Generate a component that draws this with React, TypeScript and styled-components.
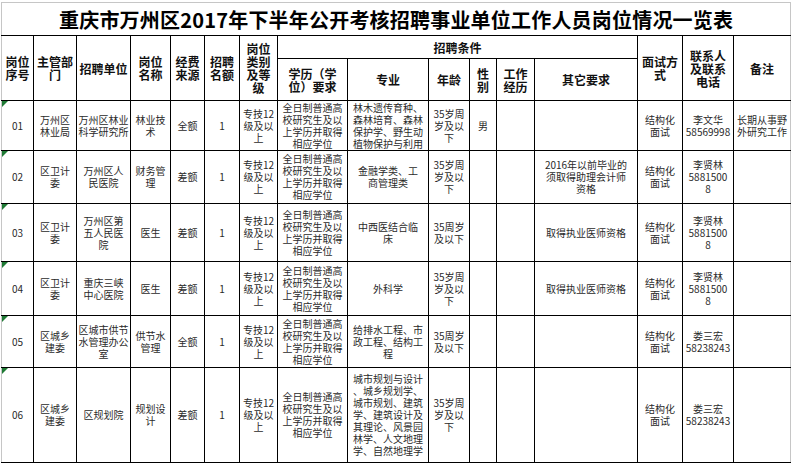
import React from "react";
import styled, { createGlobalStyle } from "styled-components";

const GlobalStyle = createGlobalStyle`
  html, body {
    margin: 0;
    padding: 0;
    background: #fff;
  }
  body {
    font-family: "Noto Sans CJK SC", "Liberation Sans", sans-serif;
  }
`;

const Wrapper = styled.div`
  width: 792px;
  height: 464px;
  overflow: hidden;
  padding: 2px 0 0 1px;
  box-sizing: border-box;
`;

const Sheet = styled.table`
  border-collapse: collapse;
  table-layout: fixed;
  width: 790px;
`;

const Col = styled.col<{ $w: number }>`
  width: ${(p) => p.$w}px;
`;

const Row = styled.tr<{ $h: number }>`
  height: ${(p) => p.$h}px;
`;

const TitleCell = styled.td`
  border: 1px solid #c6c6c6;
  border-bottom: 1px solid #000;
  text-align: center;
  vertical-align: middle;
  font-size: 20px;
  font-weight: 700;
  color: #000;
  letter-spacing: 0.2px;
  padding: 0;
`;

const HeadCell = styled.td<{ $edge?: "left" | "right" }>`
  border: 1px solid #000;
  ${(p) => (p.$edge === "left" ? "border-left-color: #c6c6c6;" : "")}
  ${(p) => (p.$edge === "right" ? "border-right-color: #c6c6c6;" : "")}
  text-align: center;
  vertical-align: middle;
  font-size: 12px;
  line-height: 13px;
  font-weight: 700;
  color: #111;
  white-space: pre;
  padding: 0 1px;
`;

const Cell = styled.td<{ $edge?: "left" | "right"; $flag?: boolean }>`
  position: relative;
  border: 1px solid #000;
  ${(p) => (p.$edge === "left" ? "border-left-color: #c6c6c6;" : "")}
  ${(p) => (p.$edge === "right" ? "border-right-color: #c6c6c6;" : "")}
  text-align: center;
  vertical-align: middle;
  font-size: 10px;
  line-height: 12px;
  color: #2a2a2a;
  white-space: pre;
  padding: 0 1px;

  &::before {
    content: "";
    display: ${(p) => (p.$flag ? "block" : "none")};
    position: absolute;
    top: 0;
    left: 0;
    border-top: 6px solid #1f7a34;
    border-right: 6px solid transparent;
  }
`;

const widths = [32, 43, 54, 40, 34, 35, 38, 70, 81, 41, 27, 38, 103, 45, 51, 57];

const edu = "全日制普通高\n校研究生及以\n上学历并取得\n相应学位";
const rank = "专技12\n级及以\n上";
const age = "35岁周\n岁及以\n下";
const age2 = "35周岁\n及以下";
const exam = "结构化\n面试";

interface Post {
  no: string;
  dept: string;
  unit: string;
  name: string;
  fund: string;
  quota: string;
  major: string;
  age: string;
  sex: string;
  other: string;
  contact: string;
  note: string;
  h: number;
}

const posts: Post[] = [
  {
    no: "01",
    dept: "万州区\n林业局",
    unit: "万州区林业\n科学研究所",
    name: "林业技\n术",
    fund: "全额",
    quota: "1",
    major: "林木遗传育种、\n森林培育、森林\n保护学、野生动\n植物保护与利用",
    age: age,
    sex: "男",
    other: "",
    contact: "李文华\n58569998",
    note: "长期从事野\n外研究工作",
    h: 50,
  },
  {
    no: "02",
    dept: "区卫计\n委",
    unit: "万州区人\n民医院",
    name: "财务管\n理",
    fund: "差额",
    quota: "1",
    major: "金融学类、工\n商管理类",
    age: age,
    sex: "",
    other: "2016年以前毕业的\n须取得助理会计师\n资格",
    contact: "李贤林\n5881500\n8",
    note: "",
    h: 53,
  },
  {
    no: "03",
    dept: "区卫计\n委",
    unit: "万州区第\n五人民医\n院",
    name: "医生",
    fund: "差额",
    quota: "1",
    major: "中西医结合临\n床",
    age: age2,
    sex: "",
    other: "取得执业医师资格",
    contact: "李贤林\n5881500\n8",
    note: "",
    h: 58,
  },
  {
    no: "04",
    dept: "区卫计\n委",
    unit: "重庆三峡\n中心医院",
    name: "医生",
    fund: "差额",
    quota: "1",
    major: "外科学",
    age: age,
    sex: "",
    other: "取得执业医师资格",
    contact: "李贤林\n5881500\n8",
    note: "",
    h: 54,
  },
  {
    no: "05",
    dept: "区城乡\n建委",
    unit: "区城市供节\n水管理办公\n室",
    name: "供节水\n管理",
    fund: "全额",
    quota: "1",
    major: "给排水工程、市\n政工程、结构工\n程",
    age: age2,
    sex: "",
    other: "",
    contact: "娄三宏\n58238243",
    note: "",
    h: 52,
  },
  {
    no: "06",
    dept: "区城乡\n建委",
    unit: "区规划院",
    name: "规划设\n计",
    fund: "差额",
    quota: "1",
    major:
      "城市规划与设计\n、城乡规划学、\n城市规划、建筑\n学、建筑设计及\n其理论、风景园\n林学、人文地理\n学、自然地理学",
    age: age,
    sex: "",
    other: "",
    contact: "娄三宏\n58238243",
    note: "",
    h: 95,
  },
];

const App: React.FC = () => {
  return (
    <Wrapper>
      <GlobalStyle />
      <Sheet>
        <colgroup>
          {widths.map((w, i) => (
            <Col key={i} $w={w} />
          ))}
        </colgroup>
        <tbody>
          <Row $h={33}>
            <TitleCell colSpan={16}>
              重庆市万州区2017年下半年公开考核招聘事业单位工作人员岗位情况一览表
            </TitleCell>
          </Row>
          <Row $h={23}>
            <HeadCell rowSpan={2} $edge="left">{"岗位\n序号"}</HeadCell>
            <HeadCell rowSpan={2}>{"主管部\n门"}</HeadCell>
            <HeadCell rowSpan={2}>招聘单位</HeadCell>
            <HeadCell rowSpan={2}>{"岗位\n名称"}</HeadCell>
            <HeadCell rowSpan={2}>{"经费\n来源"}</HeadCell>
            <HeadCell rowSpan={2}>{"招聘\n名额"}</HeadCell>
            <HeadCell rowSpan={2}>{"岗位\n类别\n及等\n级"}</HeadCell>
            <HeadCell colSpan={6}>招聘条件</HeadCell>
            <HeadCell rowSpan={2}>{"面试方\n式"}</HeadCell>
            <HeadCell rowSpan={2}>{"联系人\n及联系\n电话"}</HeadCell>
            <HeadCell rowSpan={2} $edge="right">备注</HeadCell>
          </Row>
          <Row $h={42}>
            <HeadCell>{"学历（学\n位）要求"}</HeadCell>
            <HeadCell>专业</HeadCell>
            <HeadCell>年龄</HeadCell>
            <HeadCell>{"性\n别"}</HeadCell>
            <HeadCell>{"工作\n经历"}</HeadCell>
            <HeadCell>其它要求</HeadCell>
          </Row>
          {posts.map((p) => (
            <Row key={p.no} $h={p.h}>
              <Cell $edge="left" $flag>{p.no}</Cell>
              <Cell>{p.dept}</Cell>
              <Cell>{p.unit}</Cell>
              <Cell>{p.name}</Cell>
              <Cell>{p.fund}</Cell>
              <Cell>{p.quota}</Cell>
              <Cell>{rank}</Cell>
              <Cell>{edu}</Cell>
              <Cell>{p.major}</Cell>
              <Cell>{p.age}</Cell>
              <Cell>{p.sex}</Cell>
              <Cell></Cell>
              <Cell>{p.other}</Cell>
              <Cell>{exam}</Cell>
              <Cell>{p.contact}</Cell>
              <Cell $edge="right">{p.note}</Cell>
            </Row>
          ))}
        </tbody>
      </Sheet>
    </Wrapper>
  );
};

export default App;
